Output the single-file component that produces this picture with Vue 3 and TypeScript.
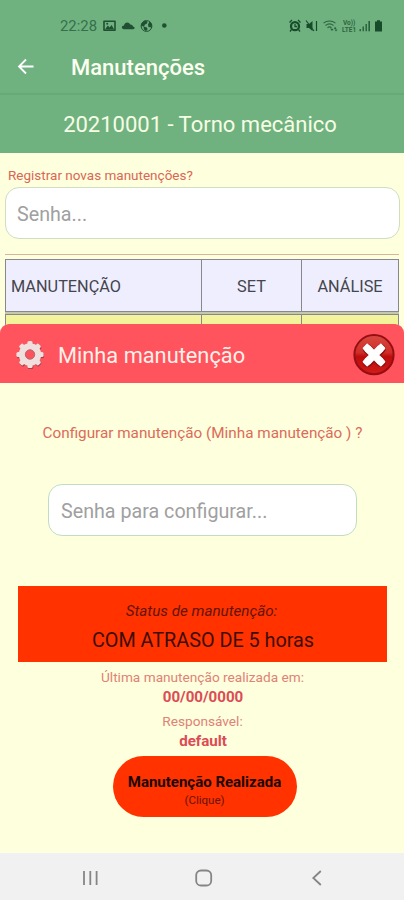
<script setup lang="ts">
import { ref } from 'vue'

interface MaintenanceDetails {
  name: string
  status: string
  lastDate: string
  owner: string
}

const columns: string[] = ['MANUTENÇÃO', 'SET', 'ANÁLISE']
const details: MaintenanceDetails = {
  name: 'Minha manutenção',
  status: 'COM ATRASO DE 5 horas',
  lastDate: '00/00/0000',
  owner: 'default',
}
const password = ref('')
const configPassword = ref('')
const gearAngles: number[] = [0, 45, 90, 135, 180, 225, 270, 315]
</script>

<template>
  <div class="screen">
    <header class="top">
      <div class="status-bar">
        <span class="clock">22:28</span>
        <svg class="left-icons" width="66" height="14" viewBox="0 0 66 14" fill="#204f31">
          <path fill-rule="evenodd" d="M1 1.500h11a.8.8 0 0 1 .8.8v9a.8.8 0 0 1-.8.8H1a.8.8 0 0 1-.8-.8v-9a.8.8 0 0 1 .8-.8zM1.800 3v7.600h9.400V3z" />
          <path d="M2 10.500l2.800-4.100 1.800 2 2-2.400 2.600 4.500z" />
          <circle cx="4.200" cy="4.700" r="1" />
          <path d="M21 10.200c-2.800 0-2.800-3.500 0-3.600.4-3.800 5.200-4.200 6.200-1 2 .1 2.700 1 2.700 2 2.400.2 2.200 2.600.2 2.600z" />
          <circle cx="43.500" cy="7" r="5.400" fill="none" stroke="#204f31" stroke-width="1" />
          <path d="M38.500 4.500l3.500-3 2.500 1-.5 2-2 1-1 2-3-.5zM45 5.500l1.500-3 2.500 3-.5 3-3-.5zM40.500 7.500l3.500 1 .5 2-1.500 1.500-2-1.500z" />
          <circle cx="61.300" cy="6.500" r="2.300" />
        </svg>
        <svg class="right-icons" width="96" height="14" viewBox="0 0 96 14" fill="#174c2a">
          <circle cx="7" cy="7.200" r="4" fill="none" stroke="#174c2a" stroke-width="2.300" />
          <path d="M1.500 3.500L4 1M10 1l2.500 2.500M3.500 10.500L2 12.500M10.500 10.500l1.500 2M7 5v2.500h2" fill="none" stroke="#174c2a" stroke-width="1.300" />
          <path d="M18.500 5H21L24.500 2v10L21 9h-2.500z" />
          <path d="M18 1.500l8 10.500M28.500 2v10" fill="none" stroke="#174c2a" stroke-width="1.200" />
          <g fill="none" stroke="#174c2a" stroke-width="1.100" opacity=".75">
            <path d="M35.500 4.200c3.500-3 8.500-3 12 0M37.500 6.500c2.500-2 5.500-2 8 0M39.500 8.700c1.300-1 2.700-1 4 0" />
          </g>
          <path d="M42 9.500l2 2.500 1.500-2zM47 7.500l1.500 2.500H46zM48 12.500l-1.500-2h3z" opacity=".8" />
          <text x="55" y="6.300" class="lte">Vo))</text>
          <text x="54" y="12.600" class="lte">LTE1</text>
          <g opacity=".75">
            <path d="M71.500 10H73v2.300h-1.500zM74.500 7.500H76v4.800h-1.500zM77.500 5H79v7.300h-1.500z" />
          </g>
          <path d="M80.500 2h1.300v10.300h-1.300z" />
          <path d="M87 2.500h2V1.200h3v1.300h2v10h-7z" />
        </svg>
      </div>
      <div class="app-bar">
        <svg width="18" height="18" viewBox="0 0 18 18" fill="none" stroke="#fff" stroke-width="1.800">
          <path d="M16.500 9.500H2.200M9 2.500l-7 7 7 7" />
        </svg>
        <h1>Manutenções</h1>
      </div>
    </header>
    <div class="machine"><span>20210001 - Torno mecânico</span></div>

    <main class="page">
      <label class="register" for="pw"><span>Registrar novas manutenções?</span></label>
      <input id="pw" v-model="password" class="field" placeholder="Senha..." />
      <div class="rule"></div>
      <div class="row head">
        <div v-for="c in columns" :key="c" class="cell"><span>{{ c }}</span></div>
      </div>
      <div class="row body">
        <div v-for="c in columns" :key="c" class="cell"></div>
      </div>
    </main>

    <section class="sheet">
      <div class="sheet-head">
        <svg class="gear" width="30" height="30" viewBox="0 0 30 30">
          <g fill="#a33f49" transform="translate(.5 .5)">
            <rect v-for="a in gearAngles" :key="a" x="12.200" y="1.500" width="5.600" height="7" rx="1.500" :transform="`rotate(${a} 15 15)`" />
          </g>
          <g fill="#efe0de" transform="translate(0 -.5)">
            <rect v-for="a in gearAngles" :key="a" x="12.400" y="1.400" width="5.200" height="7" rx="1.600" :transform="`rotate(${a} 15 15)`" />
          </g>
          <circle cx="15" cy="14.500" r="7.900" fill="none" stroke="#efe0de" stroke-width="6.500" />
          <circle cx="15" cy="14.500" r="4.700" fill="#fb535d" stroke="#bd6870" stroke-width="1" />
        </svg>
        <h2>{{ details.name }}</h2>
        <svg class="close" width="42" height="42" viewBox="0 0 42 42">
          <defs>
            <linearGradient id="ball" x1="0" y1="0" x2="0" y2="1">
              <stop offset="0" stop-color="#d84a42" />
              <stop offset=".45" stop-color="#cf2d27" />
              <stop offset=".55" stop-color="#bb0d0d" />
              <stop offset="1" stop-color="#d31c18" />
            </linearGradient>
          </defs>
          <circle cx="21" cy="20.700" r="19.600" fill="url(#ball)" stroke="#960d12" stroke-width="2" />
          <path d="M14.500 15l13.500 13.500M28 15L14.500 28.500" stroke="#8e1416" stroke-width="9.500" stroke-linecap="round" />
          <path d="M14 14l14 14M28 14L14 28" stroke="#fff" stroke-width="7.500" />
          <path d="M14.200 11.200l2.800 2.800-3 3-2.800-2.800zM27.800 11.200l3 3-2.800 2.800-3-3zM14.200 30.800l2.800-2.800-3-3-2.800 2.800zM27.800 30.800l3-3-2.800-2.800-3 3z" fill="#fff" stroke="#fff" stroke-width="3" stroke-linejoin="round" />
        </svg>
      </div>
      <div class="sheet-body">
        <p class="question"><span>Configurar manutenção ({{ details.name }} ) ?</span></p>
        <input v-model="configPassword" class="field config" placeholder="Senha para configurar..." />
        <div class="status">
          <em>Status de manutenção:</em>
          <span class="late">{{ details.status }}</span>
        </div>
        <span class="caption last">Última manutenção realizada em:</span>
        <strong class="date">{{ details.lastDate }}</strong>
        <span class="caption resp">Responsável:</span>
        <strong class="owner">{{ details.owner }}</strong>
        <button class="done" type="button">
          <b>Manutenção Realizada</b>
          <small>(Clique)</small>
        </button>
      </div>
      <nav class="nav-bar">
        <svg width="18" height="18" viewBox="0 0 18 18" stroke="#858585" stroke-width="1.800">
          <path d="M3 2v14M9.300 2v14M15.600 2v14" />
        </svg>
        <svg width="18" height="18" viewBox="0 0 18 18" fill="none" stroke="#858585" stroke-width="1.800">
          <rect x="1.200" y="1.500" width="15" height="15" rx="4.800" />
        </svg>
        <svg width="18" height="18" viewBox="0 0 18 18" fill="none" stroke="#858585" stroke-width="1.800">
          <path d="M12.800 2L5.300 9l7.500 7" />
        </svg>
      </nav>
    </section>
  </div>
</template>

<style>
body {
  background: #feffdc;
}
</style>

<style scoped>
* {
  box-sizing: border-box;
}
h1, h2, p {
  margin: 0;
}
.screen {
  position: relative;
  width: 404px;
  height: 900px;
  overflow: hidden;
  background: #feffdc;
  font-family: Roboto, "Liberation Sans", sans-serif;
}
span, h1, h2, em, strong, b {
  white-space: nowrap;
}
.top {
  height: 95px;
  background: #6fb280;
  border-bottom: 2px solid #67a978;
}
.status-bar {
  display: flex;
  align-items: center;
  height: 38px;
  padding: 13px 20px 0 60px;
}
.clock {
  width: 43px;
  font-size: 14.9px;
  line-height: 18px;
  color: #35704a;
}
.right-icons {
  margin-left: auto;
}
.lte {
  font-size: 6.5px;
  font-weight: 700;
  opacity: .75;
}
.app-bar {
  display: flex;
  align-items: center;
  height: 56px;
  padding-left: 17px;
  gap: 36px;
}
h1 {
  padding-top: 4px;
  color: #fdfff0;
  font-size: 22px;
  font-weight: 500;
  line-height: 28px;
}
.machine {
  display: flex;
  align-items: center;
  justify-content: center;
  height: 58px;
  padding: 1px 4px 0 0;
  background: #6fb280;
  color: #f7fde4;
  font-size: 22px;
}
.page {
  padding: 14px 5px 0;
}
.register {
  display: block;
  height: 20px;
  padding-left: 3px;
  color: #da6657;
  font-size: 13.500px;
  line-height: 16px;
}
.field {
  display: block;
  width: 395px;
  height: 52px;
  padding: 2px 11px 0;
  border: 1px solid #cfddc1;
  border-radius: 14px;
  background: #fff;
  color: #555;
  font-family: inherit;
  font-size: 19.700px;
}
.field::placeholder {
  color: #a0a0a0;
  opacity: 1;
}
.rule {
  height: 1px;
  margin-top: 15px;
  background: #d9b59a;
}
.row {
  display: grid;
  grid-template-columns: 195px 100px 97px;
  width: 394px;
  border: 1px solid #88888c;
}
.row.head {
  height: 53px;
  margin-top: 4px;
  background: #eeeeff;
  color: #45454d;
  font-size: 16.300px;
}
.row.head span {
  padding-top: 1px;
}
.row.body {
  height: 40px;
  margin-top: 2px;
  background: #f2f39b;
  box-shadow: 0 -2px 0 #c3c9ad;
}
.cell {
  display: flex;
  align-items: center;
  justify-content: center;
  border-left: 1px solid #88888c;
}
.cell:first-child {
  justify-content: flex-start;
  padding-left: 5px;
  border-left: 0;
}
.sheet {
  position: absolute;
  inset: 324px 0 0;
  display: flex;
  flex-direction: column;
  border-radius: 9px 9px 0 0;
  background: #feffdc;
}
.sheet-head {
  display: flex;
  align-items: center;
  height: 59px;
  padding: 2px 9px 0 15px;
  border-radius: 9px 9px 0 0;
  background: #ff535e;
}
h2 {
  margin-left: 13px;
  padding-top: 2px;
  color: #fff0e8;
  font-size: 21.800px;
  font-weight: 400;
}
.close {
  margin-left: auto;
}
.sheet-body {
  display: flex;
  flex: 1;
  flex-direction: column;
  align-items: center;
  padding-top: 40px;
}
.question {
  padding-left: 1px;
  color: #dc6b5b;
  font-size: 15.270px;
  line-height: 20px;
}
.config {
  width: 309px;
  margin: 41px 0 0 1px;
  padding-left: 12px;
  border-color: #c2dcc4;
}
.status {
  display: flex;
  flex-direction: column;
  align-items: center;
  width: 369px;
  height: 76px;
  margin: 50px 0 0 1px;
  padding-top: 16px;
  background: #ff3200;
  color: #3d0e08;
}
em {
  padding-right: 2px;
  font-size: 15.200px;
  line-height: 19px;
  color: #62150a;
}
.late {
  margin-top: 8px;
  padding-left: 1px;
  font-size: 19.800px;
  line-height: 24px;
}
.caption {
  padding-left: 1px;
  color: #e08278;
  font-size: 13.650px;
  line-height: 18px;
}
.last {
  margin-top: 6px;
}
.date, .owner {
  padding-left: 2px;
  color: #dc4b56;
  font-size: 15.100px;
  font-weight: 700;
  line-height: 20px;
}
.date {
  padding-top: 1px;
}
.resp {
  margin-top: 5px;
}
.owner {
  margin-top: 1px;
}
.done {
  display: flex;
  flex-direction: column;
  align-items: center;
  width: 184px;
  height: 61px;
  margin: 5px 0 0 5px;
  padding: 17px 0 0;
  border: 0;
  border-radius: 31px;
  background: #ff3200;
  color: #1c0704;
  font-family: inherit;
}
b {
  font-size: 15px;
  font-weight: 700;
  line-height: 19px;
}
small {
  color: #681408;
  font-size: 11.500px;
  line-height: 16px;
}
.nav-bar {
  display: flex;
  align-items: center;
  justify-content: space-between;
  height: 47px;
  padding: 2px 78px 0 81px;
  background: #f1f1f1;
}
</style>
